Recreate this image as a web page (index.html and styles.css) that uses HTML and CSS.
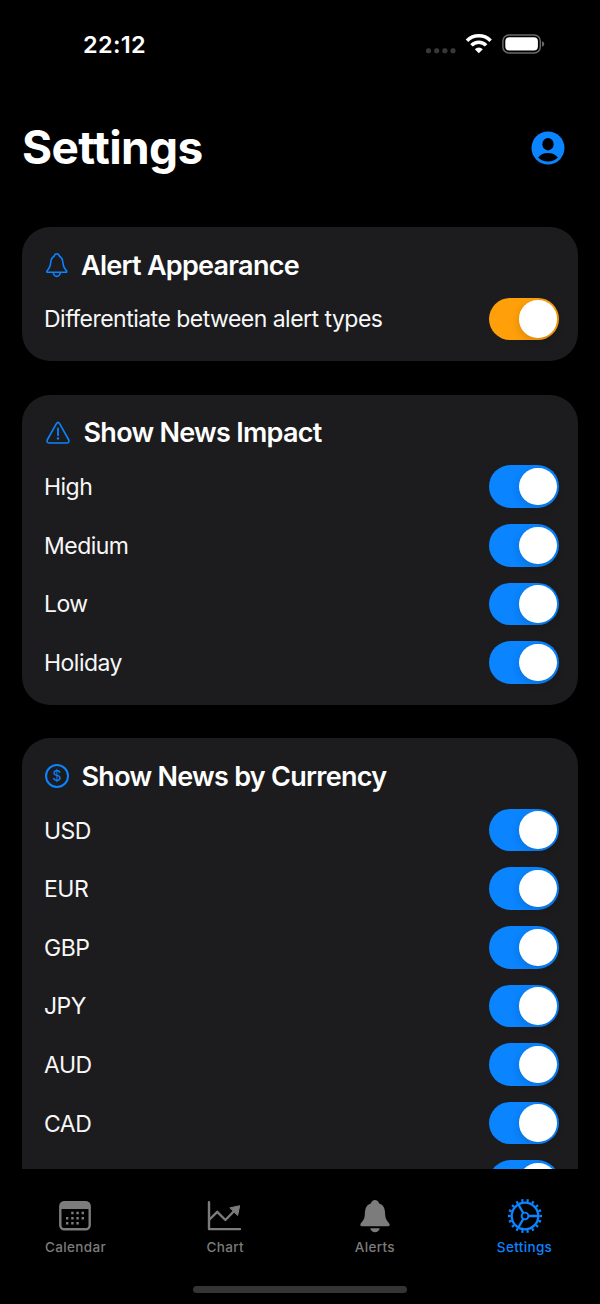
FILE: index.html
```html
<!DOCTYPE html>
<html lang="en">
<head>
<meta charset="utf-8">
<title>Settings</title>
<link rel="stylesheet" href="styles.css">
</head>
<body>
<div class="screen">
  <header class="status">
    <span class="time">22:12</span>
    <svg class="status-icons" width="120" height="24" viewBox="0 0 120 24">
      <g fill="#38383a"><rect x="1" y="16.200" width="5" height="5" rx="2"/><rect x="9.200" y="16.200" width="5" height="5" rx="2"/><rect x="17.400" y="16.200" width="5" height="5" rx="2"/><rect x="25.500" y="16.200" width="5" height="5" rx="2"/></g>
      <g fill="none" stroke="#fff" stroke-width="3.500"><path d="M42 8.800a16.500 16.500 0 0 1 23.600 0"/><path d="M46.500 13.400a10.200 10.200 0 0 1 14.600 0"/></g>
      <path d="M49.800 17.200a5.600 5.600 0 0 1 8 0L53.800 21.300z" fill="#fff"/>
      <rect x="77.900" y="2.900" width="37.400" height="18" rx="6" fill="none" stroke="#68686a" stroke-width="1.500"/>
      <rect x="80.300" y="5.300" width="32.600" height="13.200" rx="4" fill="#fff"/>
      <path d="M117 9.300q2.300.7 2.300 2.700t-2.300 2.700z" fill="#68686a"/>
    </svg>
  </header>
  <div class="heading">
    <h1>Settings</h1>
    <svg width="34" height="34" viewBox="0 0 34 34">
      <circle cx="17" cy="17" r="16.500" fill="#0a84ff"/>
      <ellipse cx="17" cy="13.200" rx="5.600" ry="6.200" fill="#000"/>
      <path d="M7.200 26.400C9.500 23.500 13 22.100 17 22.100s7.500 1.400 9.800 4.300C24.300 29 21 30.400 17 30.400S9.700 29 7.200 26.400z" fill="#000"/>
    </svg>
  </div>
  <main class="content">
    <section class="card">
      <h2 class="t-alert"><svg width="24" height="26" viewBox="0 0 24 26" fill="none" stroke="#0a84ff" stroke-width="1.600" stroke-linejoin="round"><path d="M2.500 20.300H21.100Q22 20.300 21.600 19C19.800 16.700 18.100 15.500 17.900 10.800C17.700 7 16.600 5.400 14.500 4.300C14 2.400 13.200 1.700 11.800 1.700S9.600 2.400 9.100 4.300C7 5.400 5.900 7 5.700 10.800C5.500 15.500 3.800 16.700 2 19Q1.600 20.300 2.500 20.300z"/><path d="M8.400 20.500a3.400 3.900 0 0 0 6.800 0"/></svg><span>Alert Appearance</span></h2>
      <div class="row long"><span>Differentiate between alert types</span><i class="toggle orange"></i></div>
    </section>
    <section class="card">
      <h2 class="t-impact"><svg width="26" height="26" viewBox="0 0 26 26" fill="none" stroke="#0a84ff" stroke-width="1.600" stroke-linejoin="round"><path d="M11.400 3.600Q13 1.200 14.600 3.600L23.800 20Q24.600 22.800 22 23H4Q1.400 22.800 2.200 20z"/><path d="M13 8.500v6.800" stroke-width="1.800" stroke-linecap="round"/><circle cx="13" cy="18.500" r="1.200" fill="#0a84ff" stroke="none"/></svg><span>Show News Impact</span></h2>
      <div class="row"><span>High</span><i class="toggle"></i></div>
      <div class="row"><span>Medium</span><i class="toggle"></i></div>
      <div class="row"><span>Low</span><i class="toggle"></i></div>
      <div class="row"><span>Holiday</span><i class="toggle"></i></div>
    </section>
    <section class="card">
      <h2 class="t-currency"><span class="coin">$</span><span>Show News by Currency</span></h2>
      <div class="row"><span>USD</span><i class="toggle"></i></div>
      <div class="row"><span>EUR</span><i class="toggle"></i></div>
      <div class="row"><span>GBP</span><i class="toggle"></i></div>
      <div class="row"><span>JPY</span><i class="toggle"></i></div>
      <div class="row"><span>AUD</span><i class="toggle"></i></div>
      <div class="row"><span>CAD</span><i class="toggle"></i></div>
      <div class="row"><span></span><i class="toggle"></i></div>
    </section>
  </main>
  <nav class="tabs">
    <div class="tab">
      <svg width="36" height="36" viewBox="0 0 36 36"><rect x="3.300" y="4.300" width="29.400" height="27" rx="4" fill="none" stroke="#7c7c7c" stroke-width="2.400"/><path d="M3 11V7.500q0-4 4-4h22q4 0 4 4V11z" fill="#7c7c7c"/><g stroke="#7c7c7c" stroke-width="2.400" stroke-dasharray="2.400 2.800"><path d="M14.200 15h13"/><path d="M9 20.200h18.200"/><path d="M9 25.300h13"/></g></svg>
      <span>Calendar</span>
    </div>
    <div class="tab">
      <svg width="36" height="36" viewBox="0 0 36 36" fill="none" stroke="#7c7c7c" stroke-width="2.400" stroke-linecap="round" stroke-linejoin="round"><path d="M2 4.200V31.100H33"/><path d="M2.500 21.500L10.200 13.800L18.400 22L28.200 12"/><path d="M23.200 9.800L32.700 7.700L30.700 17.200z" fill="#7c7c7c" stroke-width="1"/></svg>
      <span>Chart</span>
    </div>
    <div class="tab">
      <svg width="36" height="36" viewBox="0 0 36 36" fill="#7c7c7c"><path d="M4.800 28.300Q3 28.300 3.300 26.300C5 23.500 7.400 22 7.800 17C8 11 9 7.200 13.800 5.600C14.500 3.200 16 2 18 2s3.500 1.200 4.200 3.600C27 7.200 28 11 28.200 17C28.600 22 31 23.500 32.700 26.300Q33 28.300 31.200 28.300z"/><path d="M13.200 30.300h9.600c-.8 2.500-2.500 3.900-4.800 3.900s-4-1.400-4.800-3.900z"/></svg>
      <span>Alerts</span>
    </div>
    <div class="tab active">
      <svg width="36" height="36" viewBox="0 0 36 36" fill="none" stroke="#0a84ff" stroke-width="2.300"><circle cx="18" cy="18" r="13.300"/><circle cx="18" cy="18" r="15.600" stroke-width="2.800" stroke-dasharray="2.200 3.245" pathLength="98.010" stroke-dashoffset="1.100"/><circle cx="18" cy="18" r="3.400" stroke-width="1.900"/><path d="M21.400 18H31.500M16.300 15.100L11.250 6.300M16.300 20.900L11.250 29.700"/></svg>
      <span>Settings</span>
    </div>
  </nav>
  <div class="home"></div>
</div>
</body>
</html>
```
FILE: styles.css
```css
* { box-sizing: border-box; }
body { margin: 0; background: #000; color: #fff; font-family: Inter, "Liberation Sans", sans-serif; }
.screen { width: 600px; height: 1304px; display: flex; flex-direction: column; overflow: hidden; }
.status { height: 90px; padding: 0 55px 0 83px; display: flex; justify-content: space-between; align-items: center; flex: none; }
.time { font-size: 23.500px; font-weight: 600; line-height: 30px; letter-spacing: .3px; }
.status-icons { flex: none; margin-top: -2px; }
.heading { height: 137px; padding: 0 35px 20px 22px; display: flex; align-items: center; justify-content: space-between; flex: none; }
.heading svg { margin-top: -2px; }
h1 { margin: -4px 0 0; font-size: 46px; font-weight: 700; line-height: 56px; letter-spacing: -0.6px; }
.content { height: 942px; flex: none; padding: 0 22px; overflow: hidden; display: flex; flex-direction: column; gap: 33.500px; }
.card { flex: none; background: #1c1c1e; border-radius: 28px; padding: 19.200px 19px 12.900px 22px; }
h2 { margin: 0 0 5.500px; height: 38px; display: flex; align-items: center; font-size: 27px; font-weight: 600; letter-spacing: -0.72px; white-space: nowrap; }
h2 svg { flex: none; }
.t-alert { gap: 12px; padding-left: 1px; }
.t-impact { gap: 12.500px; padding-left: 1px; }
.t-currency { gap: 12.500px; padding-left: 1px; }
.coin { width: 24px; height: 24px; border: 2px solid #0a84ff; border-radius: 50%; color: #0a84ff; font-size: 14px; font-weight: 400; line-height: 20px; text-align: center; letter-spacing: 0; }
.row { height: 58.600px; display: flex; align-items: center; justify-content: space-between; font-size: 23px; letter-spacing: -0.52px; color: #f7f7f7; }
.row span { padding-top: 1px; }
.toggle { width: 70px; height: 42.500px; border-radius: 22px; background: #0a84ff; padding: 2.500px; display: flex; justify-content: flex-end; flex: none; }
.toggle::after { content: ""; width: 37.500px; height: 37.500px; border-radius: 50%; background: #fff; box-shadow: 0 3px 8px rgba(0, 0, 0, .15); }
.orange { background: #ff9f0a; }
.tabs { height: 110px; flex: none; display: grid; grid-template-columns: repeat(4, 149.700px); justify-content: center; padding-top: 29px; }
.tab { display: flex; flex-direction: column; align-items: center; color: #7c7c7c; font-size: 13.500px; font-weight: 500; letter-spacing: .35px; line-height: 18px; gap: 4px; }
.active { color: #0a84ff; }
.home { width: 214px; height: 7px; border-radius: 4px; background: #343434; margin: 7px auto 0; flex: none; }
```
